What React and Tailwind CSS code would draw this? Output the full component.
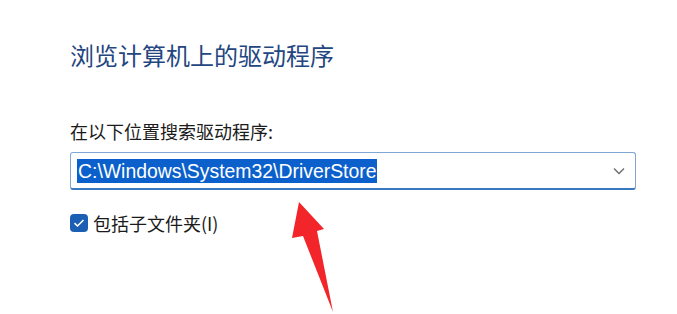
export default function App() {
  const cjk = { fontFamily: '"Noto Sans CJK SC", "Noto Sans", sans-serif' };

  return (
    <div className="relative w-[677px] h-[314px] overflow-hidden bg-white">
      <div className="pl-[70px] pt-[39px]">
        <h1 style={cjk} className="text-[24px] leading-[32px] font-normal text-[#24467f]">
          浏览计算机上的驱动程序
        </h1>

        <p style={cjk} className="mt-[48px] text-[18px] leading-[24px] text-[#1b1b1b]">
          在以下位置搜索驱动程序:
        </p>

        <div className="mt-[9px] w-[566px] h-[38px] flex items-center justify-between rounded-[3px] border border-[#7fa6d4] border-b-2 border-b-[#3a78c0] bg-white pl-[6px] pr-[10px]">
          <span
            style={{ fontFamily: '"Liberation Sans", Arial, sans-serif' }}
            className="bg-[#0b60cc] text-white text-[19.4px] leading-[24px] px-[1px]"
          >
            C:\Windows\System32\DriverStore
          </span>
          <svg width="12" height="8" viewBox="0 0 12 8" fill="none">
            <path d="M1 1.5 L6 6.5 L11 1.5" stroke="#6b6b6b" strokeWidth="1.3" />
          </svg>
        </div>

        <label className="mt-[21px] flex items-center gap-[5px] h-[24px]">
          <span className="w-[18px] h-[18px] rounded-[4px] bg-[#1b5fb5] flex items-center justify-center">
            <svg width="12" height="10" viewBox="0 0 12 10" fill="none">
              <path d="M1.5 5.2 L4.5 8 L10.5 2" stroke="white" strokeWidth="1.6" />
            </svg>
          </span>
          <span style={cjk} className="text-[18px] leading-[24px] text-[#1b1b1b]">
            包括子文件夹(I)
          </span>
        </label>
      </div>

      {/* red annotation arrow */}
      <svg className="absolute left-0 top-0" width="677" height="314" viewBox="0 0 677 314">
        <polygon
          points="299,202 324,229 317,231 333,312 303,236 292,238"
          fill="#f2262a"
        />
      </svg>
    </div>
  );
}
